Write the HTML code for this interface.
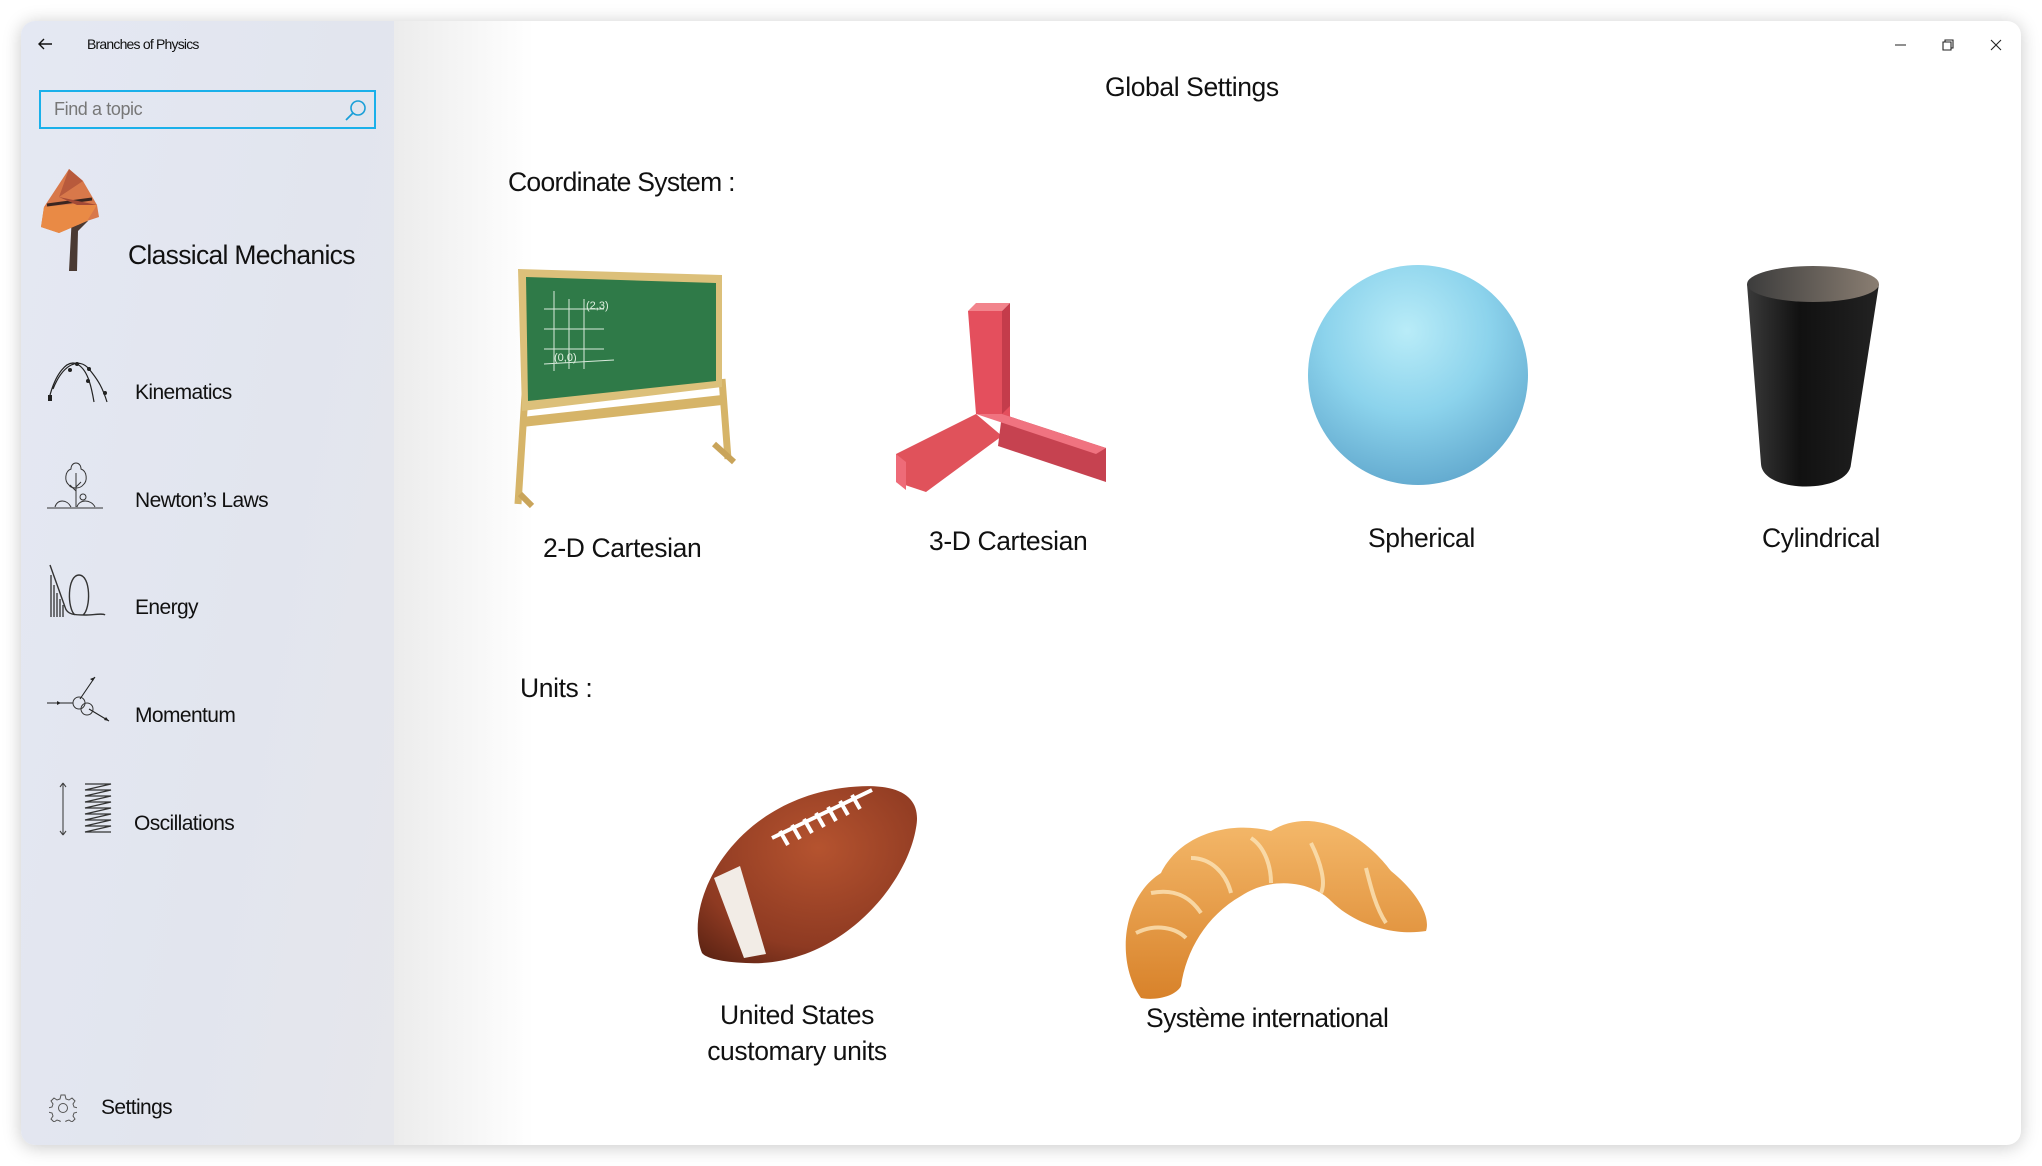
<!DOCTYPE html>
<html><head><meta charset="utf-8"><style>
*{margin:0;padding:0;box-sizing:border-box}
body{width:2042px;height:1166px;background:#fff;position:relative;overflow:hidden;font-family:"Liberation Sans",sans-serif;color:#111}
.win{position:absolute;left:21px;top:21px;width:2000px;height:1124px;border-radius:14px;overflow:hidden;background:#fff;box-shadow:0 2px 18px rgba(0,0,0,.22)}
.side{position:absolute;left:0;top:0;width:373px;height:100%;background:linear-gradient(100deg,#e4e8f3 0%,#e2e5ee 60%,#e6e7ec 100%)}
.fade{position:absolute;left:373px;top:0;width:140px;height:100%;background:linear-gradient(90deg,#ececec,#fff)}
.t{position:absolute;white-space:nowrap;letter-spacing:-0.4px}
.m{font-size:26.5px}
svg{position:absolute}
</style></head><body>
<div class="win">
<div class="side"></div><div class="fade"></div>
<svg style="left:16px;top:16px" width="16" height="14" viewBox="0 0 16 14"><path d="M15 7H2M7 2L2 7l5 5" stroke="#111" stroke-width="1.4" fill="none"/></svg>
<div class="t" style="left:66px;top:15px;font-size:14px;letter-spacing:-0.8px">Branches of Physics</div>
<div style="position:absolute;left:18px;top:69px;width:337px;height:39px;border:2px solid #1ab0ea"></div>
<div class="t" style="left:33px;top:78px;font-size:18px;color:#777">Find a topic</div>
<svg style="left:323px;top:77px" width="24" height="24" viewBox="0 0 24 24"><circle cx="14" cy="10" r="7" stroke="#1a9fd8" stroke-width="1.6" fill="none"/><path d="M9 15L2 22" stroke="#1a9fd8" stroke-width="1.8"/></svg>
<svg style="left:18px;top:146px" width="70" height="104" viewBox="0 0 70 104"><path d="M33 48l-3 56h8l1-40 10-10-4-2-6 6z" fill="#4a3a33"/><path d="M30 2L5 40 2 60 20 66 48 54 60 50 58 38 44 14z" fill="#d8784a"/><path d="M30 2L20 30 44 14z" fill="#b85a3c"/><path d="M5 40l40-4 13 2-10 16-28 12L2 60z" fill="#e98a45"/><path d="M8 38l45-6" stroke="#3b2620" stroke-width="3"/><path d="M20 30l18 8 20 0" fill="#a34a36"/></svg>
<div class="t" style="left:107px;top:219px;font-size:26.5px;letter-spacing:-0.7px">Classical Mechanics</div>
<svg style="left:26px;top:338px" width="64" height="44" viewBox="0 0 64 44"><path d="M2 40C8 15 20 0 30 5S44 25 47 43M6 30C16 5 32-2 42 10S56 30 60 43" stroke="#222" stroke-width="1.2" fill="none"/><circle cx="30" cy="5" r="2" fill="#222"/><circle cx="42" cy="10" r="2" fill="#222"/><circle cx="23" cy="11" r="2" fill="#222"/><circle cx="58" cy="34" r="2" fill="#222"/><circle cx="41" cy="22" r="2" fill="#222"/><rect x="1" y="36" width="4" height="6" fill="#222"/></svg>
<div class="t" style="left:114px;top:360px;font-size:21px;letter-spacing:-0.6px">Kinematics</div>
<svg style="left:26px;top:440px" width="58" height="50" viewBox="0 0 58 50"><path d="M0 47H56M8 46c2-8 12-8 16 0M30 46c2-8 14-8 18 0M29 46V12M29 30l-6-6M29 26l5-5" stroke="#333" stroke-width="1" fill="none"/><path d="M24 8c0-8 10-8 10 0 6 2 7 12 2 16-3 4-12 4-14 0-5-4-4-14 2-16z" stroke="#333" stroke-width="1" fill="none"/><circle cx="36" cy="36" r="3" stroke="#333" fill="none"/></svg>
<div class="t" style="left:114px;top:468px;font-size:21px;letter-spacing:-0.6px">Newton’s Laws</div>
<svg style="left:26px;top:542px" width="60" height="56" viewBox="0 0 60 56"><path d="M3 2L18 44c2 8 10 8 20 8 8 0 18-2 20 0M28 52c-8-6-8-40 4-40s12 34 4 40" stroke="#333" stroke-width="1.4" fill="none"/><path d="M4 12v42M7 22v32M10 30v24M13 36v18M16 42v12" stroke="#222" stroke-width="1.2"/></svg>
<div class="t" style="left:114px;top:575px;font-size:21px;letter-spacing:-0.6px">Energy</div>
<svg style="left:26px;top:652px" width="64" height="52" viewBox="0 0 64 52"><path d="M0 30H26M33 26L48 4M42 36L62 48" stroke="#222" stroke-width="1.1" fill="none"/><circle cx="32" cy="30" r="6" stroke="#333" fill="none"/><circle cx="40" cy="36" r="6" stroke="#333" fill="none"/><path d="M48 4l-5 2 3 2zM62 48l-5-1 2-3zM14 30l-4-2v4z" fill="#222"/></svg>
<div class="t" style="left:114px;top:683px;font-size:21px;letter-spacing:-0.6px">Momentum</div>
<svg style="left:62px;top:761px" width="32" height="54" viewBox="0 0 32 54"><path d="M2 2H28L2 8H28L2 14H28L2 20H28L2 26H28L2 32H28L2 38H28L2 44H28L2 50H28" stroke="#333" stroke-width="1.2" fill="none"/></svg>
<svg style="left:36px;top:760px" width="12" height="56" viewBox="0 0 12 56"><path d="M6 2v52M6 2l-3 4M6 2l3 4M6 54l-3-4M6 54l3-4" stroke="#444" stroke-width="1.1" fill="none"/></svg>
<div class="t" style="left:113px;top:791px;font-size:21px;letter-spacing:-0.6px">Oscillations</div>
<svg style="left:28px;top:1073px" width="28" height="28" viewBox="0 0 28 28"><path d="M12 1h4l1 4 3 1 3-2 3 3-2 3 1 3 4 1v4l-4 1-1 3 2 3-3 3-3-2-3 1-1 4h-4l-1-4-3-1-3 2-3-3 2-3-1-3-4-1v-4l4-1 1-3-2-3 3-3 3 2 3-1z" stroke="#555" stroke-width="1" fill="none"/><circle cx="14" cy="14" r="4.5" stroke="#555" fill="none"/></svg>
<div class="t" style="left:80px;top:1075px;font-size:21px;letter-spacing:-0.6px">Settings</div>
<svg style="left:1870px;top:16px" width="120" height="16" viewBox="0 0 120 16"><path d="M4 8h11" stroke="#222" stroke-width="1"/><path d="M52 5h8v8h-8zM54 5V3h8v8h-2" stroke="#222" stroke-width="1.1" fill="none"/><path d="M100 3l10 10M110 3l-10 10" stroke="#222" stroke-width="1.1"/></svg>
<div class="t m" style="left:1084px;top:51px">Global Settings</div>
<div class="t m" style="left:487px;top:146px;letter-spacing:-0.7px">Coordinate System :</div>
<div class="t m" style="left:522px;top:512px">2-D Cartesian</div>
<div class="t m" style="left:908px;top:505px">3-D Cartesian</div>
<div class="t m" style="left:1347px;top:502px">Spherical</div>
<div class="t m" style="left:1741px;top:502px">Cylindrical</div>
<div class="t m" style="left:499px;top:652px">Units :</div>
<div class="t m" style="left:656px;top:976px;width:240px;text-align:center;line-height:36px">United States<br>customary units</div>
<div class="t m" style="left:1125px;top:982px;letter-spacing:-0.6px">Système international</div>
<svg style="left:493px;top:248px" width="230" height="240" viewBox="0 0 230 240"><path d="M12 110L4 235M208 110l6 80" stroke="#d6b468" stroke-width="7"/><path d="M200 175l20 18" stroke="#c9a45a" stroke-width="6"/><path d="M6 225l12 12" stroke="#c9a45a" stroke-width="6"/><path d="M4 0l204 6v112L8 142z" fill="#dcc07a"/><path d="M12 8l190 6v98L14 132z" fill="#2f7a48"/><path d="M8 148l200-22v10L8 158z" fill="#d6b468"/><g stroke="#d9eadc" stroke-width="1" fill="none"><path d="M30 80h60M30 60h60M30 40h60M40 22v80M55 30v70M70 30v70M30 95l70-4"/></g><text x="72" y="40" fill="#e0f0e0" font-size="11">(2,3)</text><text x="40" y="92" fill="#e0f0e0" font-size="11">(0,0)</text></svg>
<svg style="left:873px;top:272px" width="215" height="210" viewBox="0 0 215 210"><path d="M74 18h34l8 8v103l-8-8H82z" fill="#e44f5d"/><path d="M74 18l8-8h34l-8 8z" fill="#f2848c"/><path d="M108 18l8-8v103l-8 8z" fill="#c43c4b"/><path d="M82 121l-80 40v28l30 10 76-56z" fill="#e0525b"/><path d="M2 161v28l10 8v-28z" fill="#ee6b78"/><path d="M108 121l104 34v34l-108-36z" fill="#c64250"/><path d="M82 121h26l104 34-10 6-96-32z" fill="#f07380"/></svg>
<svg style="left:1285px;top:242px" width="225" height="225" viewBox="0 0 225 225"><defs><radialGradient id="sg" cx="0.45" cy="0.3" r="0.75"><stop offset="0" stop-color="#b9ecf8"/><stop offset="0.5" stop-color="#8cd3ec"/><stop offset="1" stop-color="#5fa6cc"/></radialGradient></defs><circle cx="112" cy="112" r="110" fill="url(#sg)"/></svg>
<svg style="left:1724px;top:243px" width="140" height="230" viewBox="0 0 140 230"><defs><linearGradient id="cg" x1="0" x2="1"><stop offset="0" stop-color="#3a3a3a"/><stop offset="0.4" stop-color="#111"/><stop offset="1" stop-color="#222"/></linearGradient><linearGradient id="ct" x1="0" x2="1"><stop offset="0" stop-color="#3c3c3c"/><stop offset="1" stop-color="#8a7e72"/></linearGradient></defs><path d="M2 20L16 200c2 30 88 30 90 0L134 20z" fill="url(#cg)"/><ellipse cx="68" cy="20" rx="66" ry="18" fill="url(#ct)"/></svg>
<svg style="left:671px;top:762px" width="235" height="185" viewBox="0 0 235 185"><defs><radialGradient id="fg" cx="0.55" cy="0.35" r="0.8"><stop offset="0" stop-color="#b5532f"/><stop offset="0.7" stop-color="#8e3a22"/><stop offset="1" stop-color="#5e2414"/></radialGradient></defs><path d="M10 170C-10 120 40 20 150 5c60-8 80 10 74 40-10 60-80 140-170 135-25-1-40-5-44-10z" fill="url(#fg)"/><path d="M22 95l30 80 22-4-26-88z" fill="#f2ece6"/><path d="M80 55l100-48" stroke="#fff" stroke-width="4"/><g stroke="#fff" stroke-width="4"><path d="M88 48l8 14M100 42l8 14M112 36l8 14M124 30l8 14M136 24l8 14M148 18l8 14M160 12l8 14"/></g></svg>
<svg style="left:1100px;top:792px" width="310" height="190" viewBox="0 0 310 190"><defs><linearGradient id="crg" x1="0" y1="0" x2="0" y2="1"><stop offset="0" stop-color="#f4b86a"/><stop offset="1" stop-color="#d8822a"/></linearGradient></defs><path d="M20 185C-5 150 0 85 40 60 60 20 110 8 150 18c40-25 90 0 120 40 25 20 40 45 35 60-30 5-70-5-95-30-20-20-60-25-90-5-35 20-55 55-60 90-5 10-25 15-40 12z" fill="url(#crg)"/><g stroke="#fbe4b8" stroke-width="4" fill="none" opacity=".8"><path d="M15 120c20-10 40-5 50 5M30 80c25-5 40 5 50 20M70 45c20 0 35 15 40 35M130 25c15 10 20 30 20 45M190 30c10 20 15 40 10 50M245 55c5 20 10 40 20 55"/></g></svg>
</div>
</body></html>
